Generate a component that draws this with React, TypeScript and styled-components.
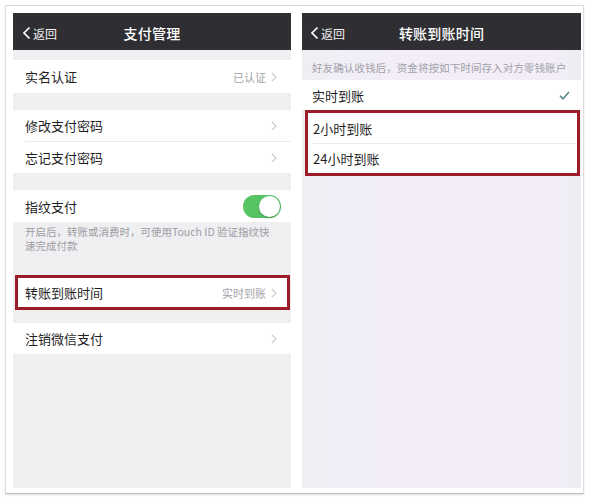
import React from 'react';
import styled, { createGlobalStyle } from 'styled-components';

const GlobalStyle = createGlobalStyle`
  html, body {
    margin: 0;
    padding: 0;
    background: #ffffff;
  }
  * {
    box-sizing: border-box;
  }
  body {
    font-family: "Noto Sans CJK SC", "Noto Sans", "Liberation Sans", sans-serif;
  }
`;

const Frame = styled.div`
  margin: 5px;
  width: 579px;
  height: 489px;
  border: 1px solid #dcdcdc;
  border-bottom-color: #bcbcbc;
  box-shadow: 0 1px 2px rgba(0, 0, 0, 0.12);
  padding: 7px 2px 5px 7px;
  display: grid;
  grid-template-columns: 278px 279px;
  column-gap: 11px;
`;

const Phone = styled.div<{ $tint?: boolean }>`
  height: 475px;
  display: flex;
  flex-direction: column;
  overflow: hidden;
  background: ${(p) =>
    p.$tint
      ? 'linear-gradient(to right, #efeef2 0%, #f1eef7 14%, #f3edf9 50%, #f2edf8 90%, #eeedf1 100%)'
      : '#efeff2'};
`;

const NavBar = styled.div`
  height: 37px;
  flex: none;
  background: #2f2f33;
  display: grid;
  grid-template-columns: 1fr auto 1fr;
  align-items: center;
  padding-top: 3px;
  color: #ffffff;
`;

const Back = styled.div<{ $left: number }>`
  display: flex;
  align-items: center;
  gap: 2px;
  padding-left: ${(p) => p.$left}px;
  font-size: 12px;
  color: #f2f2f2;
`;

const Title = styled.div`
  font-size: 14px;
  font-weight: 500;
  letter-spacing: 0.2px;
`;

const Gap = styled.div<{ $h: number }>`
  height: ${(p) => p.$h}px;
  flex: none;
`;

const Group = styled.div`
  background: #ffffff;
  flex: none;
`;

const Row = styled.div<{ $h: number; $pad?: number; $right?: number }>`
  height: ${(p) => p.$h}px;
  display: flex;
  align-items: center;
  padding-left: ${(p) => p.$pad ?? 12}px;
  padding-right: ${(p) => p.$right ?? 14}px;
  background: #ffffff;
  font-size: 13px;
  color: #1f1f1f;
`;

const Label = styled.span`
  flex: 1;
`;

const Value = styled.span`
  font-size: 11px;
  color: #a3a3a8;
  margin-right: 5px;
`;

const Divider = styled.div<{ $inset: number }>`
  height: 1px;
  margin-left: ${(p) => p.$inset}px;
  background: #ebebee;
`;

const Highlight = styled.div<{ $l: number; $r: number }>`
  flex: none;
  margin: 0 ${(p) => p.$r}px 0 ${(p) => p.$l}px;
  border: 3px solid #9c1c2a;
  background: #ffffff;
`;

const Footnote = styled.div`
  height: 53px;
  flex: none;
  padding: 3px 14px 0 12px;
  font-size: 10.5px;
  line-height: 13.5px;
  color: #9d9da2;
`;

const Note = styled.div`
  height: 30px;
  flex: none;
  display: flex;
  align-items: flex-end;
  padding: 0 0 5px 10px;
  font-size: 10.6px;
  color: #a2a2a7;
  white-space: nowrap;
`;

const Toggle = styled.div`
  width: 38px;
  height: 23px;
  border-radius: 12px;
  background: #56c464;
  display: flex;
  justify-content: flex-end;
  align-items: center;
  padding: 1px;
`;

const Knob = styled.div`
  width: 21px;
  height: 21px;
  border-radius: 50%;
  background: #ffffff;
  box-shadow: 0 1px 2px rgba(0, 0, 0, 0.25);
`;

const Chevron = () => (
  <svg width="6" height="10" viewBox="0 0 6 10">
    <path d="M1 1l4 4-4 4" fill="none" stroke="#cacacf" strokeWidth="1.1" />
  </svg>
);

const BackArrow = () => (
  <svg width="9" height="14" viewBox="0 0 9 14">
    <path d="M7.5 1.5L2 7l5.5 5.5" fill="none" stroke="#ffffff" strokeWidth="1.7" />
  </svg>
);

const Check = () => (
  <svg width="11" height="9" viewBox="0 0 11 9">
    <path d="M1 4.8l3 3 6-6.8" fill="none" stroke="#4f8682" strokeWidth="1.5" />
  </svg>
);

function Header({ title, left }: { title: string; left: number }) {
  return (
    <NavBar>
      <Back $left={left}>
        <BackArrow />
        <span>返回</span>
      </Back>
      <Title>{title}</Title>
      <div />
    </NavBar>
  );
}

function PaySettings() {
  return (
    <Phone>
      <Header title="支付管理" left={9} />
      <Gap $h={10} />
      <Group>
        <Row $h={33}>
          <Label>实名认证</Label>
          <Value>已认证</Value>
          <Chevron />
        </Row>
      </Group>
      <Gap $h={17} />
      <Group>
        <Row $h={31}>
          <Label>修改支付密码</Label>
          <Chevron />
        </Row>
        <Divider $inset={12} />
        <Row $h={31}>
          <Label>忘记支付密码</Label>
          <Chevron />
        </Row>
      </Group>
      <Gap $h={17} />
      <Group>
        <Row $h={32} $right={10}>
          <Label>指纹支付</Label>
          <Toggle>
            <Knob />
          </Toggle>
        </Row>
      </Group>
      <Footnote>开启后，转账或消费时，可使用Touch ID 验证指纹快速完成付款</Footnote>
      <Highlight $l={2} $r={1}>
        <Row $h={29} $pad={7} $right={10}>
          <Label>转账到账时间</Label>
          <Value>实时到账</Value>
          <Chevron />
        </Row>
      </Highlight>
      <Gap $h={13} />
      <Group>
        <Row $h={31}>
          <Label>注销微信支付</Label>
          <Chevron />
        </Row>
      </Group>
    </Phone>
  );
}

function ArrivalTime() {
  return (
    <Phone $tint>
      <Header title="转账到账时间" left={8} />
      <Note>好友确认收钱后，资金将按如下时间存入对方零钱账户</Note>
      <Group>
        <Row $h={30} $pad={10} $right={11}>
          <Label>实时到账</Label>
          <Check />
        </Row>
      </Group>
      <Highlight $l={3} $r={1}>
        <Row $h={30} $pad={5}>
          <Label>2小时到账</Label>
        </Row>
        <Divider $inset={5} />
        <Row $h={29} $pad={5}>
          <Label>24小时到账</Label>
        </Row>
      </Highlight>
    </Phone>
  );
}

export default function App() {
  return (
    <>
      <GlobalStyle />
      <Frame>
        <PaySettings />
        <ArrivalTime />
      </Frame>
    </>
  );
}
